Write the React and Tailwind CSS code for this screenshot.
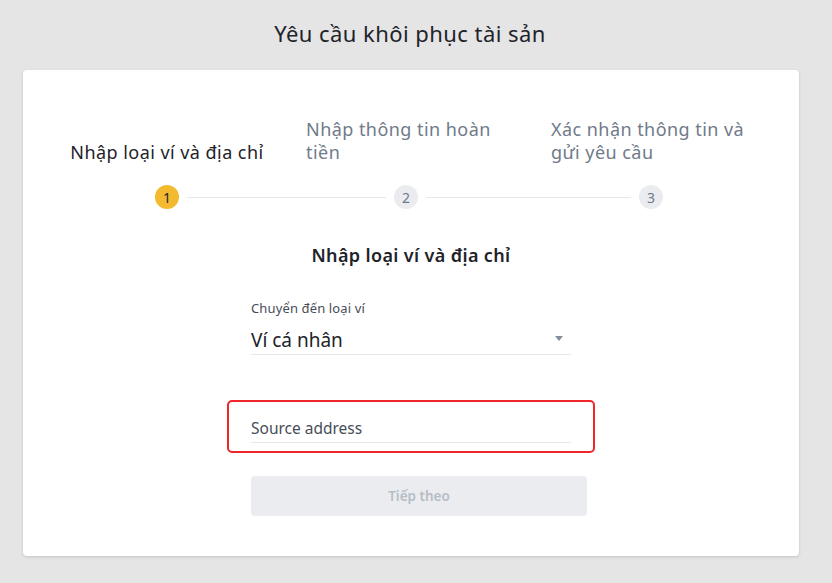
const steps = [
  { n: 1, lines: ["Nhập loại ví và địa chỉ"], active: true, w: "w-[240px]" },
  { n: 2, lines: ["Nhập thông tin hoàn", "tiền"], active: false, w: "w-[238px]" },
  { n: 3, lines: ["Xác nhận thông tin và", "gửi yêu cầu"], active: false, w: "w-[252px]" },
];

const Step = ({ step, first, last }) => {
  return (
    <div className={`${step.w} flex flex-col`}>
      <div className="h-[46px] flex items-end">
        <div
          className={`mx-auto ${
            step.lines.length > 1 ? "w-[200px]" : "w-fit"
          } text-left text-[18px] leading-[23px] tracking-[0.025em] ${
            step.active ? "text-[#1e2329]" : "text-[#707a8a]"
          }`}
        >
          {step.lines.map((l, i) => (
            <div key={i} className="whitespace-nowrap">
              {l}
            </div>
          ))}
        </div>
      </div>
      <div className="mt-[21px] flex items-center h-[24px]">
        <div className={`flex-1 h-px mr-2 ${first ? "" : "bg-[#e6e8ea]"}`} />
        <div
          className={`w-6 h-6 rounded-full flex items-center justify-center text-[14px] ${
            step.active
              ? "bg-[#f3ba2f] text-[#1e2329]"
              : "bg-[#eaecef] text-[#707a8a]"
          }`}
        >
          {step.n}
        </div>
        <div className={`flex-1 h-px ml-2 ${last ? "" : "bg-[#e6e8ea]"}`} />
      </div>
    </div>
  );
};

const App = () => {
  return (
    <div className="min-h-screen bg-[#e5e5e5] pt-[19px] font-['Noto_Sans',sans-serif]">
      <h1 className="w-[820px] text-center text-[22px] leading-[28px] tracking-[0.02em] text-[#1e2329] mb-[23px]">
        Yêu cầu khôi phục tài sản
      </h1>
      <div className="ml-[23px] w-[776px] h-[486px] bg-white rounded-[4px] shadow-[0_1px_3px_rgba(0,0,0,0.15)] pt-[48px]">
        <div className="flex pl-[24px]">
          {steps.map((s, i) => (
            <Step key={s.n} step={s} first={i === 0} last={i === steps.length - 1} />
          ))}
        </div>

        <h2 className="mt-[34px] text-center text-[18px] leading-[24px] tracking-[0.02em] font-semibold text-[#1e2329]">
          Nhập loại ví và địa chỉ
        </h2>

        <div className="mx-auto w-[320px] mt-[32px]">
          <div className="text-[13px] leading-[18px] tracking-[0.01em] text-[#474d57]">
            Chuyển đến loại ví
          </div>
          <div className="mt-[9px] h-[29px] flex items-start justify-between border-b border-[#e6e8ea]">
            <span className="text-[19px] leading-[28px] text-[#1e2329]">
              Ví cá nhân
            </span>
            <span className="mt-[10px] mr-[8px] w-0 h-0 border-l-[4px] border-r-[4px] border-t-[5px] border-l-transparent border-r-transparent border-t-[#848e9c]" />
          </div>
        </div>

        <div className="mx-auto mt-[45px] w-[368px] h-[53px] border-2 border-[#f0272a] rounded-[5px] px-[22px] pt-[15px]">
          <div className="h-[26px] border-b border-[#e6e8ea] text-[15.5px] leading-[22px] text-[#474d57]">
            Source address
          </div>
        </div>

        <button className="ml-[228px] mt-[23px] w-[336px] h-[40px] rounded-[4px] bg-[#eaecef] text-[13.5px] font-semibold text-[#b7bdc6]">
          Tiếp theo
        </button>
      </div>
    </div>
  );
};

export default App;
